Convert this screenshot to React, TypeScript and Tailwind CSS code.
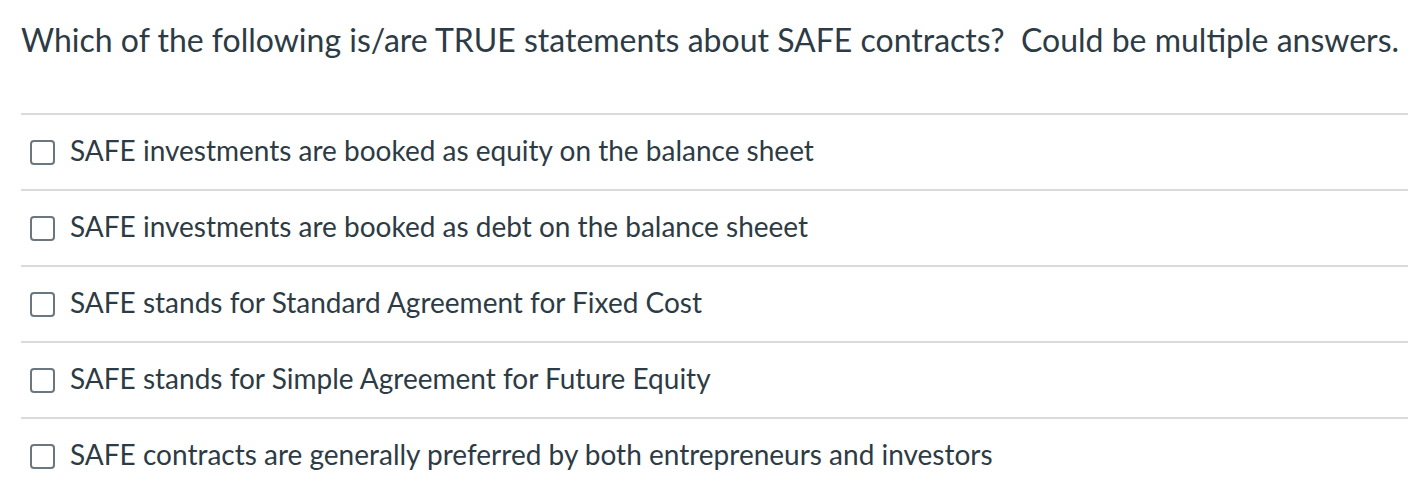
import React from "react";

const options = [
  "SAFE investments are booked as equity on the balance sheet",
  "SAFE investments are booked as debt on the balance sheeet",
  "SAFE stands for Standard Agreement for Fixed Cost",
  "SAFE stands for Simple Agreement for Future Equity",
  "SAFE contracts are generally preferred by both entrepreneurs and investors",
];

export default function App() {
  return (
    <div className="w-[1426px] h-[502px] bg-white text-[#2d3b45]" style={{ fontFamily: "Lato, 'Noto Sans', sans-serif" }}>
      <div className="pl-[21px] pr-[18px]">
        <div className="h-[84px] pt-[20px] text-[32px] leading-[40px]">
          Which of the following is/are TRUE statements about SAFE contracts?&nbsp; Could be multiple answers.
        </div>
        <div className="h-[29px]" />
        {options.map((o) => (
          <div key={o} className="border-t-2 border-[#dadada] h-[76px] flex items-center">
            <div className="ml-[9px] mt-[1px] w-[25px] h-[25px] rounded-[4px] border-2 border-[#6b7780] shrink-0" />
            <span className="ml-[15px] text-[28px] leading-[34px] pb-[4px]">{o}</span>
          </div>
        ))}
      </div>
    </div>
  );
}
